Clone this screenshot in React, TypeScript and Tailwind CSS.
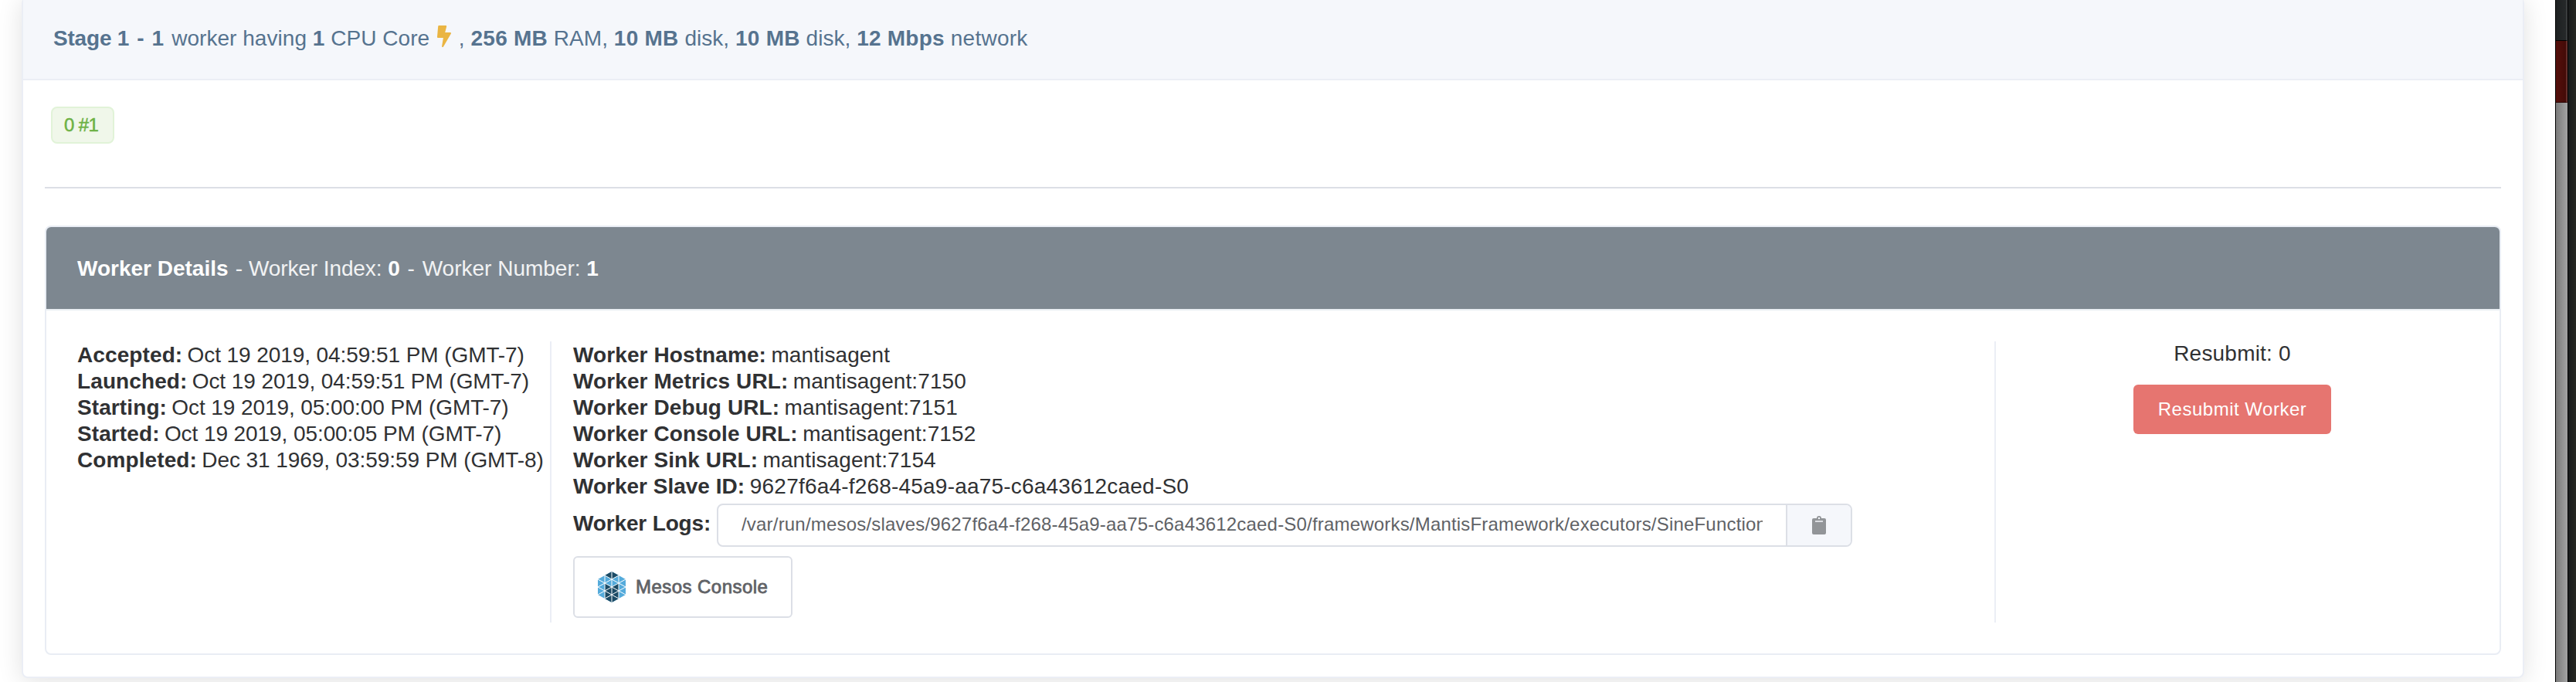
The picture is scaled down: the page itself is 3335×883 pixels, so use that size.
import type { ReactNode } from "react";

const LOG_PATH =
  "/var/run/mesos/slaves/9627f6a4-f268-45a9-aa75-c6a43612caed-S0/frameworks/MantisFramework/executors/SineFunction";

const timeline: [string, string][] = [
  ["Accepted:", "Oct 19 2019, 04:59:51 PM (GMT-7)"],
  ["Launched:", "Oct 19 2019, 04:59:51 PM (GMT-7)"],
  ["Starting:", "Oct 19 2019, 05:00:00 PM (GMT-7)"],
  ["Started:", "Oct 19 2019, 05:00:05 PM (GMT-7)"],
  ["Completed:", "Dec 31 1969, 03:59:59 PM (GMT-8)"],
];

const endpoints: [string, string][] = [
  ["Worker Hostname:", "mantisagent"],
  ["Worker Metrics URL:", "mantisagent:7150"],
  ["Worker Debug URL:", "mantisagent:7151"],
  ["Worker Console URL:", "mantisagent:7152"],
  ["Worker Sink URL:", "mantisagent:7154"],
];

function Bold({ children }: { children: ReactNode }) {
  return <b className="font-bold tracking-[0.25px]">{children}</b>;
}

function BoltIcon() {
  return (
    <svg className="mx-[2px] inline-block h-7 w-[18px] align-[-2px]" viewBox="0 0 18 28">
      <path
        fill="#eab543"
        d="M2.3 0H11c.8 0 1.3.7 1.100 1.400L10.200 9h6.700c.9 0 1.400.9 1 1.600L8 27.400c-.7 1.100-2.100.5-1.900-.7L7.900 16H1.200C.5 16-.1 15.400 0 14.700L1.200 1C1.300.4 1.700 0 2.300 0z"
      />
    </svg>
  );
}

function ClipboardIcon() {
  return (
    <svg className="h-6 w-[18px]" viewBox="0 0 18 24">
      <path
        fill="#929598"
        fillRule="evenodd"
        d="M2 3h4a3 3 0 0 1 6 0h4a2 2 0 0 1 2 2v17a2 2 0 0 1-2 2H2a2 2 0 0 1-2-2V5a2 2 0 0 1 2-2zM9 1.800a1.200 1.200 0 1 0 0 2.400 1.200 1.200 0 0 0 0-2.400zM4 6.200v1.600h10V6.200z"
      />
    </svg>
  );
}

function MesosIcon() {
  return (
    <svg className="h-10 w-9" viewBox="0 0 36 40">
      <path fill="#55abdb" d="M18 0 36 10v20L18 40 0 30V10z" />
      <path fill="#1d4c66" d="M18 0l9 5-9 5-9-5zM9 15l9 5 9-5v20l-9 5-9-5z" />
      <path
        stroke="#fff"
        strokeWidth="1"
        fill="none"
        d="M9 5v30M18 0v40M27 5v30M0 20 27 5M0 30 36 10M9 35 36 20M9 5l27 15M0 10l36 20M0 20l27 15"
      />
    </svg>
  );
}

export default function App() {
  return (
    <div className="flex h-[883px] w-[3335px] overflow-hidden bg-white font-['Liberation_Sans',Arial,sans-serif] text-[28px] leading-[34px] text-[#303133]">
      <main className="h-full w-[3308px] overflow-hidden pl-7">
        <section className="-mt-1 h-[882px] w-[3240px] rounded-lg border-2 border-[#ebeef5] bg-white shadow-[0_4px_32px_rgba(0,0,0,0.12)]">
          <header className="h-[106px] border-b-2 border-[#ebeef5] bg-[#f5f7fb] pt-[35px] pl-[39px] tracking-[0.04px] text-[#56738f]">
            <b className="tracking-[-0.2px]">
              Stage 1 <span className="mx-[2.5px]">-</span> 1
            </b>{" "}
            <span className="ml-[2.5px]">worker having</span> <b>1</b> CPU Core <BoltIcon /> , <Bold>256 MB</Bold> RAM,{" "}
            <Bold>10 MB</Bold> disk, <Bold>10 MB</Bold> disk, <Bold>12 Mbps</Bold>{" "}
            <span className="tracking-[0.25px]">network</span>
          </header>

          <div className="px-7 pt-[34px]">
            <span className="ml-2 flex h-12 w-[82px] items-center rounded-lg border-2 border-[#e1f3d8] bg-[#f0f7ea] pl-[15px] text-2xl tracking-[-0.6px] text-[#6cb144] [-webkit-text-stroke:0.5px]">
              0 #1
            </span>
            <hr className="mt-14 border-t-2 border-[#dcdfe6]" />

            <article className="mt-12 h-[556px] rounded-lg border-2 border-[#e9edf4]">
              <header className="h-[108px] rounded-t-md border-b-2 border-[#e9eef2] bg-[#7d8790] pt-[37px] pl-10 text-white">
                <b>Worker Details</b>
                <span className="text-white/90">
                  {" "}
                  <span className="ml-[1.5px]">-</span> <span className="tracking-[-0.1px]">Worker Index:</span>{" "}
                </span>
                <b>0</b>
                <span className="text-white/90">
                  {" "}
                  <span className="mr-[2px] ml-[2px]">-</span> Worker Number:{" "}
                </span>
                <b>1</b>
              </header>

              <div className="flex h-[404px] pt-10">
                <ul className="w-[654px] shrink-0 border-r-2 border-[#ebeef5] pt-px pl-10 whitespace-nowrap">
                  {timeline.map(([label, value]) => (
                    <li key={label}>
                      <b className="tracking-[0.1px]">{label}</b>{" "}
                      <span className="-ml-[1.5px] tracking-[-0.08px]">{value}</span>
                    </li>
                  ))}
                </ul>

                <div className="w-[1870px] shrink-0 border-r-2 border-[#ebeef5] pt-px pl-7 whitespace-nowrap">
                  {endpoints.map(([label, value]) => (
                    <div key={label} className="tracking-[0.1px]">
                      <b>{label}</b> <span className="-ml-[1.5px]">{value}</span>
                    </div>
                  ))}
                  <div>
                    <b>Worker Slave ID:</b>{" "}
                    <span className="-ml-px tracking-[0.2px]">9627f6a4-f268-45a9-aa75-c6a43612caed-S0</span>
                  </div>
                  <div className="mt-[5px] flex h-14 items-center">
                    <b className="w-[186px] pb-[5px] tracking-[-0.15px]">Worker Logs:</b>
                    <div className="flex h-14 w-[1470px] rounded-lg border-2 border-[#dcdfe6]">
                      <div className="mr-[30px] ml-[30px] flex-1 self-center overflow-hidden pb-[2px] text-2xl tracking-[0.19px] text-[#606266]">
                        {LOG_PATH}
                      </div>
                      <button className="flex w-[84px] items-center justify-center rounded-r-md border-l-2 border-[#dcdfe6] bg-[#f5f7fb]">
                        <ClipboardIcon />
                      </button>
                    </div>
                  </div>
                  <button className="mt-3 flex h-20 w-[284px] items-center rounded-md border-2 border-[#dcdfe6] pl-[30px] text-2xl tracking-[0.45px] text-[#606266] [-webkit-text-stroke:0.8px]">
                    <MesosIcon />
                    <span className="ml-[13px]">Mesos Console</span>
                  </button>
                </div>

                <div className="flex w-[612px] shrink-0 flex-col items-center tracking-[0.2px]">
                  <div className="-mt-px">Resubmit: 0</div>
                  <button className="mt-[23px] h-16 w-64 rounded-md bg-[#e67570] text-2xl tracking-[0.5px] text-white">
                    Resubmit Worker
                  </button>
                </div>
              </div>
            </article>
          </div>
        </section>
      </main>

      <aside className="flex h-full w-[27px]">
        <div className="flex w-[17px] flex-col border-x border-black">
          <div className="h-[53px] border-r-2 border-b border-r-[#3a3d3e] border-b-black bg-linear-to-r from-[#1d2021] to-[#26292a]" />
          <div className="h-20 border-r-2 border-b border-r-[#66302c] border-b-[#2a0505] bg-linear-to-r from-[#560f0b] to-[#430b08]" />
          <div className="flex-1 bg-linear-to-r from-[#7b7b7b] to-[#a3a3a3]" />
        </div>
        <div className="flex-1 bg-linear-to-r from-[#191c1d] to-[#272823]" />
      </aside>
    </div>
  );
}
